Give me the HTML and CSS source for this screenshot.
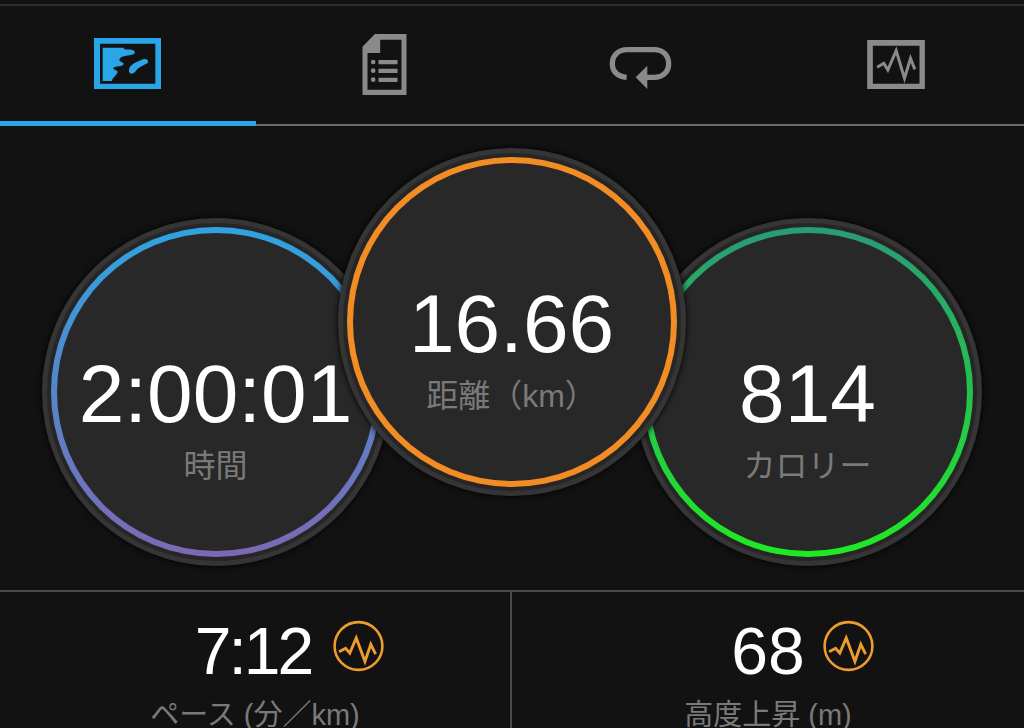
FILE: index.html
```html
<!DOCTYPE html>
<html lang="ja">
<head>
<meta charset="UTF-8">
<title>アクティビティ</title>
<link rel="stylesheet" href="styles.css">
</head>
<body>

<div class="topline"></div>

<nav class="tabs">
    <div class="tab active">
        <svg class="icon-map" viewBox="42 55 201 153">
            <path fill="#29a5e8" fill-rule="evenodd" d="M42 55H243V208H42Z M60 72V192H226V72Z"/>
            <path fill="#29a5e8" d="M68 84H130C134 94 150 86 160 92C168 98 165 104 155 105C142 108 120 108 118 120C118 128 134 126 130 135C122 142 98 138 100 147C106 152 116 152 112 160C106 170 97 176 95 184H68Z"/>
            <path fill="#29a5e8" d="M147 150C150 132 170 128 185 120C198 115 208 122 203 130C190 138 175 142 167 155C158 168 145 162 147 150Z"/>
        </svg>
    </div>
    <div class="tab">
        <svg class="icon-doc" viewBox="65 40 132 183">
            <path fill="#8a8a8a" fill-rule="evenodd" d="M102 40H197V223H65V78Z M118 57V97H80V207H182V57Z"/>
            <circle fill="#8a8a8a" cx="97" cy="124" r="7"/>
            <circle fill="#8a8a8a" cx="97" cy="150" r="7"/>
            <circle fill="#8a8a8a" cx="97" cy="177" r="7"/>
            <path fill="#8a8a8a" d="M113 118H170V131H113Z M113 144H170V157H113Z M113 171H170V184H113Z"/>
        </svg>
    </div>
    <div class="tab">
        <svg class="icon-loop" viewBox="27 52 185 126">
            <path fill="none" stroke="#8a8a8a" stroke-width="16" d="M78 143C50 140 35 125 35 102C35 78 52 60 80 60H160C188 60 204 78 204 102C204 125 188 143 160 143H135"/>
            <path fill="#8a8a8a" d="M105 143L140 108V178Z"/>
        </svg>
    </div>
    <div class="tab">
        <svg class="icon-chart" viewBox="20 30 173 147">
            <path fill="#8a8a8a" fill-rule="evenodd" d="M20 30H193V177H20Z M37 47V161H177V47Z"/>
            <path fill="none" stroke="#8a8a8a" stroke-width="9" d="M50 112L70 100L82 120L107 62L132 145L150 85L163 118"/>
        </svg>
    </div>
</nav>

<section class="gauges">
    <div class="gauge side">
        <div class="ring ring-time">
            <div class="face">
                <div class="value">2:00:01</div>
                <div class="label">時間</div>
            </div>
        </div>
    </div>
    <div class="gauge middle">
        <div class="ring ring-dist">
            <div class="face">
                <div class="value">16.66</div>
                <div class="label">距離（km）</div>
            </div>
        </div>
    </div>
    <div class="gauge side">
        <div class="ring ring-cal">
            <div class="face">
                <div class="value">814</div>
                <div class="label">カロリー</div>
            </div>
        </div>
    </div>
</section>

<section class="stats">
    <div class="stat">
        <div class="stat-value tight">7:12
            <svg class="badge" viewBox="30 0 164 160">
                <circle fill="none" stroke="#ee9c2d" stroke-width="8" cx="112" cy="80" r="74"/>
                <path fill="none" stroke="#ee9c2d" stroke-width="9" d="M52 98L72 87L85 102L105 55L132 128L150 75L165 105"/>
            </svg>
        </div>
        <div class="stat-label">ペース (分／km)</div>
    </div>
    <div class="stat">
        <div class="stat-value">68
            <svg class="badge" viewBox="30 0 164 160">
                <circle fill="none" stroke="#ee9c2d" stroke-width="8" cx="112" cy="80" r="74"/>
                <path fill="none" stroke="#ee9c2d" stroke-width="9" d="M52 98L72 87L85 102L105 55L132 128L150 75L165 105"/>
            </svg>
        </div>
        <div class="stat-label">高度上昇 (m)</div>
    </div>
</section>

</body>
</html>
```

FILE: styles.css
```css
html, body { margin: 0; height: 728px; overflow: hidden; }
body { background: #121212; color: #fff; font-family: "Liberation Sans", "Noto Sans CJK JP", sans-serif; }

.topline { height: 2px; margin-top: 4px; background: #2e2e2e; }

.tabs { display: grid; grid-template-columns: repeat(4, 1fr); height: 120px; }
.tab { display: flex; align-items: center; justify-content: center; box-sizing: border-box; padding-bottom: 2px; border-bottom: 2px solid #6a6a6a; }
.tab.active { border-bottom: 5px solid #29a5e8; padding: 0 1px 0 0; }
.icon-map { width: 67px; height: 51px; }
.icon-doc { width: 45px; height: 61px; }
.icon-loop { width: 63px; height: 42px; margin-top: 7px; }
.icon-chart { width: 58px; height: 49px; }

.gauges { display: flex; justify-content: center; height: 466px; padding: 22px 1px 0 0; box-sizing: border-box; border-bottom: 2px solid #4a4a4a; }
.gauge { width: 348px; height: 348px; box-sizing: border-box; flex: none; border-radius: 50%; border: 5px solid #353535; padding: 4px; background: #262626; box-shadow: 0 0 6px #000; }
.gauge.side { margin-top: 70px; }
.gauge.middle { margin: 0 -52px; z-index: 1; }
.ring { height: 100%; border-radius: 50%; padding: 6px; box-sizing: border-box; }
.ring-time { background: linear-gradient(#2fa3e0, #7d68b4); }
.ring-dist { background: #f28c24; }
.ring-cal { background: linear-gradient(#2a9a78, #1fea22); }
.face { height: 100%; border-radius: 50%; background: #282828; display: flex; flex-direction: column; align-items: center; padding-top: 116px; box-sizing: border-box; }

.value { font-size: 82px; line-height: 90px; }
.label { font-size: 32px; line-height: 40px; margin-top: 7px; color: #7a7a7a; }

.stats { display: grid; grid-template-columns: 1fr 1fr; }
.stat { text-align: center; padding-top: 24px; height: 140px; box-sizing: border-box; }
.stat:first-child { border-right: 2px solid #4a4a4a; }
.stat-value { position: relative; display: inline-block; font-size: 66px; line-height: 70px; }
.stat-value.tight { letter-spacing: -3px; padding-right: 4px; }
.badge { position: absolute; left: 100%; top: 4px; width: 53px; height: 52px; margin-left: 17px; }
.stat-label { font-size: 29px; line-height: 34px; margin-top: 12px; color: #7a7a7a; }
```
